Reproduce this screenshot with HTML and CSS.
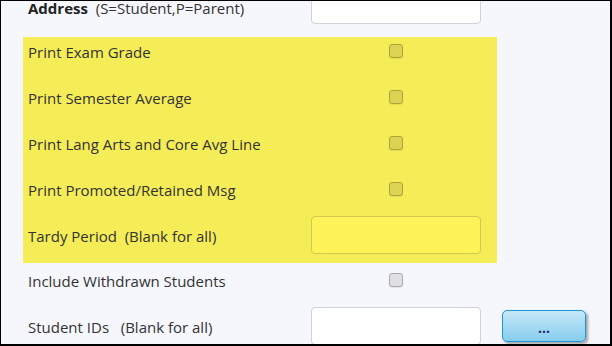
FILE: index.html
```html
<!DOCTYPE html>
<html lang="en">
<head>
  <meta charset="UTF-8">
  <title>Report Options</title>
  <link rel="stylesheet" href="styles.css">
</head>
<body>
  <div class="frame">
    <form class="options">
      <div class="row">
        <label class="label label-top"><b>Address</b>&nbsp; (S=Student,P=Parent)</label>
        <div class="control"><input type="text" class="textbox"></div>
      </div>

      <!-- highlighted block -->
      <div class="highlight">
        <div class="row">
          <label class="label" for="examGrade">Print Exam Grade</label>
          <div class="control"><input type="checkbox" id="examGrade" class="check"></div>
        </div>
        <div class="row">
          <label class="label" for="semAvg">Print Semester Average</label>
          <div class="control"><input type="checkbox" id="semAvg" class="check"></div>
        </div>
        <div class="row">
          <label class="label" for="langArts">Print Lang Arts and Core Avg Line</label>
          <div class="control"><input type="checkbox" id="langArts" class="check"></div>
        </div>
        <div class="row">
          <label class="label" for="promoted">Print Promoted/Retained Msg</label>
          <div class="control"><input type="checkbox" id="promoted" class="check"></div>
        </div>
        <div class="row">
          <label class="label" for="tardy">Tardy Period&nbsp; (Blank for all)</label>
          <div class="control"><input type="text" id="tardy" class="textbox"></div>
        </div>
      </div>

      <div class="row after-highlight">
        <label class="label" for="withdrawn">Include Withdrawn Students</label>
        <div class="control"><input type="checkbox" id="withdrawn" class="check"></div>
      </div>
      <div class="row">
        <label class="label" for="ids">Student IDs &nbsp; (Blank for all)</label>
        <div class="control"><input type="text" id="ids" class="textbox"></div>
        <button type="button" class="btn-pick">...</button>
      </div>
    </form>
  </div>
</body>
</html>
```

FILE: styles.css
```css
/* Reset default margin and padding */
* {
  margin: 0;
  padding: 0;
  box-sizing: border-box;
}

html, body {
  width: 612px;
  height: 346px;
  overflow: hidden;
}

body {
  background: #f5f7fc;
  font-family: 'Open Sans', 'Liberation Sans', sans-serif;
  font-size: 15px;
  color: #333;
}

.frame {
  width: 612px;
  height: 346px;
  border-top: 1px solid #000;
  border-left: 1px solid #000;
  border-right: 2px solid #000;
  border-bottom: 2px solid #000;
  overflow: hidden;
}

.options {
  display: flex;
  flex-direction: column;
  gap: 18px;
  margin-top: -10px;
  padding-left: 22px;
}

.row {
  display: flex;
  align-items: center;
  height: 28px;
}

.label {
  width: 288px;
  padding-left: 5px;
  padding-top: 2px;
  white-space: nowrap;
}

.label-top {
  padding-top: 5px;
}

.label b {
  color: #222;
}

.control {
  width: 170px;
  display: flex;
  justify-content: center;
}

/* Yellow highlighted options */
.highlight {
  width: 474px;
  background: #f5ed58;
  display: flex;
  flex-direction: column;
  gap: 18px;
  padding-bottom: 14px;
}

.after-highlight {
  margin-top: -15px;
}

.textbox {
  width: 170px;
  height: 38px;
  flex-shrink: 0;
  background: #fff;
  border: 1px solid #cfd3db;
  border-radius: 4px;
}

.highlight .textbox {
  background: #fff35a;
  border-color: #d3c84c;
}

.check {
  appearance: none;
  -webkit-appearance: none;
  width: 14px;
  height: 14px;
  background: #e0e0e2;
  border: 1px solid #a9a9ad;
  border-radius: 3px;
  box-shadow: 0 1px 1px rgba(0, 0, 0, 0.08);
}

.highlight .check {
  background: #dcd254;
  border-color: #aea43a;
}

.btn-pick {
  margin-left: 21px;
  width: 84px;
  height: 32px;
  flex-shrink: 0;
  border: 1px solid #1b98d4;
  border-radius: 5px;
  background: linear-gradient(#c6e7f7, #87cdee);
  box-shadow: 2px 2px 3px rgba(0, 0, 0, 0.35);
  color: #1c2870;
  font-family: 'Open Sans', 'Liberation Sans', sans-serif;
  font-size: 14px;
  font-weight: bold;
  padding-top: 3px;
  cursor: pointer;
}
```
